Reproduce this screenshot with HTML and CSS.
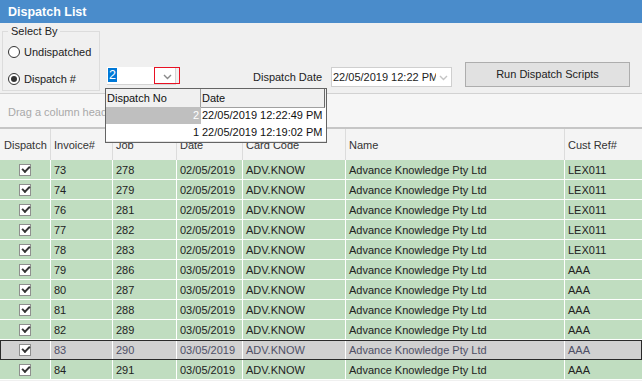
FILE: index.html
```html
<!DOCTYPE html>
<html lang="en">
<head>
  <meta charset="UTF-8">
  <title>Dispatch List</title>
  <link rel="stylesheet" href="styles.css">
</head>
<body>
  <div class="window">
    <div class="titlebar">Dispatch List</div>

    <div class="toolbar">
      <fieldset class="select-by">
        <legend>Select By</legend>
        <div class="radio"><span class="radio-dot"></span>Undispatched</div>
        <div class="radio checked"><span class="radio-dot"></span>Dispatch #</div>
      </fieldset>

      <div class="combo dispatch-combo">
        <span class="combo-text"><span class="selected-text">2</span></span>
        <span class="combo-btn focused">
          <svg width="9" height="6" viewBox="0 0 9 6"><path d="M1 1l3.5 3.5L8 1" fill="none" stroke="#8a8a8a" stroke-width="1.4"/></svg>
        </span>
      </div>

      <span class="field-label">Dispatch Date</span>

      <div class="combo date-combo">
        <span class="combo-text">22/05/2019 12:22 PM</span>
        <span class="combo-btn">
          <svg width="9" height="6" viewBox="0 0 9 6"><path d="M1 1l3.5 3.5L8 1" fill="none" stroke="#c4c4c4" stroke-width="1.4"/></svg>
        </span>
      </div>

      <button class="btn">Run Dispatch Scripts</button>
    </div>

    <div class="group-panel">Drag a column header here to group by that column</div>

    <div class="grid">
      <div class="grid-row grid-head">
        <div class="cell">Dispatch</div>
        <div class="cell">Invoice#</div>
        <div class="cell">Job</div>
        <div class="cell">Date</div>
        <div class="cell">Card Code</div>
        <div class="cell">Name</div>
        <div class="cell">Cust Ref#</div>
      </div>

      <div class="grid-row">
        <div class="cell cell-check"><span class="checkbox"></span></div>
        <div class="cell">73</div><div class="cell">278</div><div class="cell">02/05/2019</div>
        <div class="cell">ADV.KNOW</div><div class="cell">Advance Knowledge Pty Ltd</div><div class="cell">LEX011</div>
      </div>
      <div class="grid-row">
        <div class="cell cell-check"><span class="checkbox"></span></div>
        <div class="cell">74</div><div class="cell">279</div><div class="cell">02/05/2019</div>
        <div class="cell">ADV.KNOW</div><div class="cell">Advance Knowledge Pty Ltd</div><div class="cell">LEX011</div>
      </div>
      <div class="grid-row">
        <div class="cell cell-check"><span class="checkbox"></span></div>
        <div class="cell">76</div><div class="cell">281</div><div class="cell">02/05/2019</div>
        <div class="cell">ADV.KNOW</div><div class="cell">Advance Knowledge Pty Ltd</div><div class="cell">LEX011</div>
      </div>
      <div class="grid-row">
        <div class="cell cell-check"><span class="checkbox"></span></div>
        <div class="cell">77</div><div class="cell">282</div><div class="cell">02/05/2019</div>
        <div class="cell">ADV.KNOW</div><div class="cell">Advance Knowledge Pty Ltd</div><div class="cell">LEX011</div>
      </div>
      <div class="grid-row">
        <div class="cell cell-check"><span class="checkbox"></span></div>
        <div class="cell">78</div><div class="cell">283</div><div class="cell">02/05/2019</div>
        <div class="cell">ADV.KNOW</div><div class="cell">Advance Knowledge Pty Ltd</div><div class="cell">LEX011</div>
      </div>
      <div class="grid-row">
        <div class="cell cell-check"><span class="checkbox"></span></div>
        <div class="cell">79</div><div class="cell">286</div><div class="cell">03/05/2019</div>
        <div class="cell">ADV.KNOW</div><div class="cell">Advance Knowledge Pty Ltd</div><div class="cell">AAA</div>
      </div>
      <div class="grid-row">
        <div class="cell cell-check"><span class="checkbox"></span></div>
        <div class="cell">80</div><div class="cell">287</div><div class="cell">03/05/2019</div>
        <div class="cell">ADV.KNOW</div><div class="cell">Advance Knowledge Pty Ltd</div><div class="cell">AAA</div>
      </div>
      <div class="grid-row">
        <div class="cell cell-check"><span class="checkbox"></span></div>
        <div class="cell">81</div><div class="cell">288</div><div class="cell">03/05/2019</div>
        <div class="cell">ADV.KNOW</div><div class="cell">Advance Knowledge Pty Ltd</div><div class="cell">AAA</div>
      </div>
      <div class="grid-row">
        <div class="cell cell-check"><span class="checkbox"></span></div>
        <div class="cell">82</div><div class="cell">289</div><div class="cell">03/05/2019</div>
        <div class="cell">ADV.KNOW</div><div class="cell">Advance Knowledge Pty Ltd</div><div class="cell">AAA</div>
      </div>
      <div class="grid-row focused-row">
        <div class="cell cell-check"><span class="checkbox"></span></div>
        <div class="cell">83</div><div class="cell">290</div><div class="cell">03/05/2019</div>
        <div class="cell">ADV.KNOW</div><div class="cell">Advance Knowledge Pty Ltd</div><div class="cell">AAA</div>
      </div>
      <div class="grid-row">
        <div class="cell cell-check"><span class="checkbox"></span></div>
        <div class="cell">84</div><div class="cell">291</div><div class="cell">03/05/2019</div>
        <div class="cell">ADV.KNOW</div><div class="cell">Advance Knowledge Pty Ltd</div><div class="cell">AAA</div>
      </div>
    </div>

    <!-- open dropdown of the Dispatch # combo -->
    <div class="lookup-popup">
      <div class="lookup-row lookup-head">
        <div class="lookup-cell">Dispatch No</div>
        <div class="lookup-cell">Date</div>
      </div>
      <div class="lookup-row active">
        <div class="lookup-cell num">2</div>
        <div class="lookup-cell">22/05/2019 12:22:49 PM</div>
      </div>
      <div class="lookup-row">
        <div class="lookup-cell num">1</div>
        <div class="lookup-cell">22/05/2019 12:19:02 PM</div>
      </div>
    </div>
  </div>
</body>
</html>
```

FILE: styles.css
```css
body {
  margin: 0;
  overflow: hidden;
  font-family: "Liberation Sans", Arial, sans-serif;
  font-size: 11px;
  color: #222;
  background: #f0f0f0;
}

.window {
  position: relative;
  width: 642px;
  height: 381px;
  overflow: hidden;
}

.titlebar {
  height: 23px;
  line-height: 24px;
  padding-left: 8px;
  background: #4a8ccb;
  color: white;
  font-size: 12.5px;
  font-weight: bold;
}

/* top panel */
.toolbar {
  display: flex;
  align-items: flex-start;
  height: 68px;
  padding-top: 2px;
  background: #f0f0f0;
}

.select-by {
  box-sizing: border-box;
  width: 98px;
  height: 66px;
  margin: 0 0 0 2px;
  padding: 6px 0 0 5px;
  border: 1px solid #dcdcdc;
}

.select-by legend {
  padding: 0 3px;
  line-height: 13px;
  color: #222;
}

.radio {
  display: flex;
  align-items: center;
  gap: 4px;
  height: 16px;
  margin-bottom: 11px;
}

.radio-dot {
  box-sizing: border-box;
  width: 12px;
  height: 12px;
  border: 1px solid #333;
  border-radius: 50%;
  background: white;
  position: relative;
}

.radio.checked .radio-dot::after {
  content: '';
  position: absolute;
  left: 2px;
  top: 2px;
  width: 6px;
  height: 6px;
  border-radius: 50%;
  background: #333;
}

.combo {
  box-sizing: border-box;
  display: flex;
  align-items: stretch;
  background: white;
}

.combo-text {
  flex: 1;
  overflow: hidden;
  white-space: nowrap;
}

.combo-btn {
  display: flex;
  align-items: center;
  justify-content: center;
}

.dispatch-combo {
  width: 69px;
  height: 18px;
  margin: 42px 0 0 7px;
  border-right: 1px solid #d4d4d4;
  border-bottom: 1px solid #d4d4d4;
}

.dispatch-combo .combo-text {
  padding: 1px 0 0 1px;
  font-size: 12.5px;
  line-height: 14px;
}

.selected-text {
  display: inline-block;
  padding: 0 1px;
  background: #0078d7;
  color: white;
}

.dispatch-combo .combo-btn {
  box-sizing: border-box;
  width: 26px;
  height: 17px;
  margin-right: -5px;
  border: 1px solid #e81123;
  padding-top: 2px;
}

.field-label {
  width: 78px;
  margin: 45px 0 0 77px;
  line-height: 14px;
}

.date-combo {
  width: 121px;
  height: 20px;
  margin-top: 42px;
  border: 1px solid #cfcfcf;
}

.date-combo .combo-text {
  max-width: 103px;
  padding-left: 1px;
  line-height: 18px;
}

.date-combo .combo-btn {
  width: 15px;
  padding-top: 1px;
}

.btn {
  box-sizing: border-box;
  width: 165px;
  height: 25px;
  margin: 37px 0 0 13px;
  border: 1px solid #adadad;
  background: #e1e1e1;
  font-family: inherit;
  font-size: 11px;
  color: #222;
  padding: 0 0 2px;
}

.group-panel {
  box-sizing: border-box;
  height: 36px;
  padding: 2px 0 0 8px;
  line-height: 33px;
  border-top: 1px solid #d2d2d2;
  border-bottom: 2px solid #c6c6c6;
  background: #f6f6f6;
  color: #a9a9a9;
}

/* grid */
.grid-row {
  display: grid;
  grid-template-columns: 51px 62px 64px 66px 103px 219px 1fr;
  height: 20px;
  box-sizing: border-box;
  border-bottom: 1px solid white;
  background: #c0ddc0;
}

.cell {
  border-right: 1px solid white;
  padding: 1px 0 0 3px;
  line-height: 19px;
  white-space: nowrap;
  overflow: hidden;
}

.cell:last-child {
  border-right: none;
}

.grid-head {
  height: 31px;
  border-bottom: none;
  background: #f4f4f4;
}

.grid-head .cell {
  line-height: 31px;
  border-right-color: #dcdcdc;
  color: #333;
}

.grid-head .cell:first-child {
  padding-left: 4px;
}

.cell-check {
  display: flex;
  align-items: center;
  justify-content: center;
  padding: 1px 0 0;
}

.checkbox {
  box-sizing: border-box;
  position: relative;
  width: 12px;
  height: 12px;
  border: 1px solid #8f8f8f;
  background: white;
}

.checkbox::after {
  content: '';
  position: absolute;
  left: 2px;
  top: 1px;
  width: 6px;
  height: 3px;
  border-left: 2px solid #333;
  border-bottom: 2px solid #333;
  transform: rotate(-45deg);
}

.focused-row {
  background: #d1d1d1;
  outline: 1px solid #2a2a2a;
  outline-offset: -1px;
}

.focused-row .cell {
  color: #505066;
}

/* dropdown list */
.lookup-popup {
  position: absolute;
  left: 105px;
  top: 88px;
  width: 222px;
  height: 55px;
  box-sizing: border-box;
  border: 1px solid #646464;
  background: white;
  color: #111;
}

.lookup-row {
  display: grid;
  grid-template-columns: 95px 124px;
  height: 17px;
  line-height: 17px;
}

.lookup-head {
  height: 18px;
  line-height: 18px;
  background: #f0f0f0;
}

.lookup-head .lookup-cell {
  border-right: 1px solid #a0a0a0;
  border-bottom: 1px solid #a0a0a0;
  padding-left: 1px;
}

.lookup-head .lookup-cell:last-child {
  border-right-color: #696969;
}

.lookup-cell {
  white-space: nowrap;
  padding-left: 1px;
}

.lookup-cell.num {
  text-align: right;
  padding-right: 2px;
}

.lookup-row.active .num {
  background: #bfbfbf;
  color: white;
}

.lookup-row:last-child {
  border-bottom: 1px solid #e3e3e3;
}
```
